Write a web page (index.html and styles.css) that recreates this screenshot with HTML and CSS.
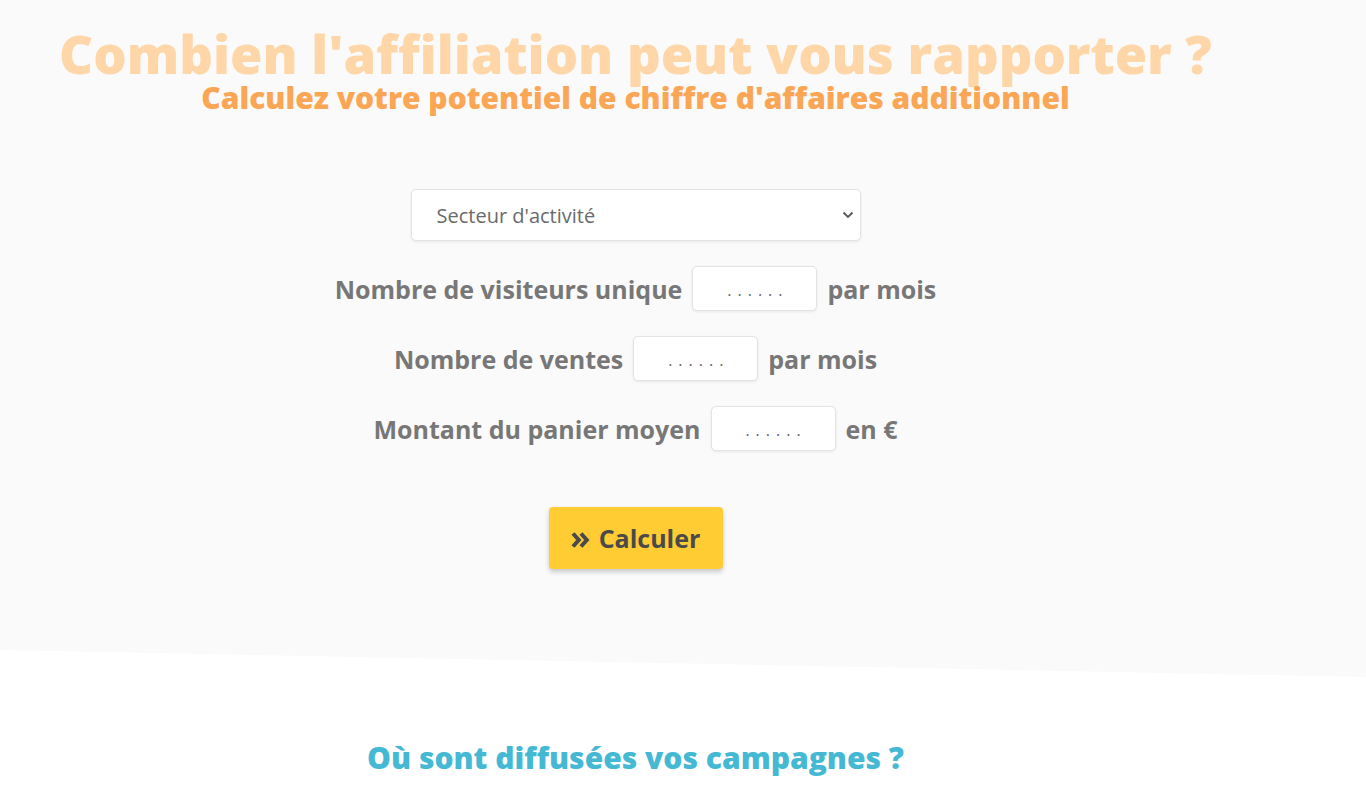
FILE: index.html
```html
<!DOCTYPE html>
<html lang="fr">
<head>
<meta charset="utf-8">
<title>Calculateur d'affiliation</title>
<link rel="stylesheet" href="styles.css">
</head>
<body>
<section class="hero">
  <div class="container">
    <h1 class="title">Combien l'affiliation peut vous rapporter ?</h1>
    <h2 class="subtitle">Calculez votre potentiel de chiffre d'affaires additionnel</h2>
    <form class="calc">
      <div class="select-wrap">
        <select class="sector">
          <option>Secteur d'activité</option>
        </select>
        <svg class="chevron" width="12" height="8" viewBox="0 0 12 8"><path d="M1.5 1.5 L6 6 L10.5 1.5" fill="none" stroke="#555" stroke-width="1.8"/></svg>
      </div>
      <div class="row">
        <span class="label">Nombre de visiteurs unique</span>
        <input class="field" type="text" placeholder="......">
        <span class="label">par mois</span>
      </div>
      <div class="row">
        <span class="label">Nombre de ventes</span>
        <input class="field" type="text" placeholder="......">
        <span class="label">par mois</span>
      </div>
      <div class="row">
        <span class="label">Montant du panier moyen</span>
        <input class="field" type="text" placeholder="......">
        <span class="label">en €</span>
      </div>
      <button class="btn" type="button">
        <svg class="btn-icon" width="19" height="18" viewBox="0 0 19 18"><path d="M2 2.5 L7.8 9 L2 15.5 M10 2.5 L15.8 9 L10 15.5" fill="none" stroke="#4a4a4a" stroke-width="4" stroke-linejoin="miter"/></svg>
        <span>Calculer</span>
      </button>
    </form>
  </div>
</section>
<section class="next">
  <div class="container">
    <h2 class="section-title">Où sont diffusées vos campagnes ?</h2>
  </div>
</section>
</body>
</html>
```
FILE: styles.css
```css
* { box-sizing: border-box; }
html, body { margin: 0; padding: 0; }
body {
  background: #ffffff;
  font-family: "Open Sans", "Liberation Sans", sans-serif;
  overflow: hidden;
}
.container {
  width: 1271px;
  text-align: center;
}
.hero {
  background: #fafafa;
  height: 677px;
  clip-path: polygon(0 0, 100% 0, 100% 100%, 0 calc(100% - 27px));
  padding-top: 29px;
}
.title {
  margin: 0;
  font-size: 52.5px;
  font-weight: 800;
  line-height: 50px;
  color: #ffd6a8;
}
.subtitle {
  margin: 4px 0 0;
  font-size: 30px;
  font-weight: 800;
  line-height: 30px;
  color: #fba654;
}
.calc {
  display: flex;
  flex-direction: column;
  align-items: center;
  margin-top: 76px;
}
.select-wrap {
  position: relative;
  width: 450px;
  height: 52px;
}
.sector {
  width: 100%;
  height: 100%;
  appearance: none;
  -webkit-appearance: none;
  background: #fff;
  border: 1px solid #e3e3e3;
  border-radius: 5px;
  box-shadow: 0 1px 3px rgba(0,0,0,0.08);
  padding: 0 25px;
  font-family: "Open Sans", sans-serif;
  font-size: 20px;
  color: #6a6a6a;
}
.chevron {
  position: absolute;
  right: 7px;
  top: 22px;
}
.row {
  display: flex;
  align-items: center;
  gap: 10px;
  margin-top: 25px;
  height: 45px;
}
.label {
  font-size: 25px;
  font-weight: 700;
  color: #777777;
}
.field {
  width: 125px;
  height: 45px;
  background: #fff;
  border: 1px solid #e3e3e3;
  border-radius: 5px;
  box-shadow: 0 1px 3px rgba(0,0,0,0.08);
  text-align: center;
  font-family: "Open Sans", sans-serif;
  font-size: 16px;
  letter-spacing: 6px;
  padding: 2px 0 0 6px;
}
.field::placeholder { color: #666; }
.btn {
  margin-top: 56px;
  width: 174px;
  height: 62px;
  display: flex;
  align-items: center;
  justify-content: center;
  gap: 9px;
  background: #ffcc33;
  border: none;
  border-radius: 4px;
  box-shadow: 0 3px 5px rgba(0,0,0,0.2);
  font-family: "Open Sans", sans-serif;
  font-size: 25px;
  font-weight: 700;
  color: #4a4a4a;
  padding: 0;
}
.btn-icon { margin-top: 3px; }
.next {
  padding-top: 63px;
}
.section-title {
  margin: 0;
  font-size: 30px;
  font-weight: 800;
  line-height: 36px;
  color: #45b9d3;
}
```
